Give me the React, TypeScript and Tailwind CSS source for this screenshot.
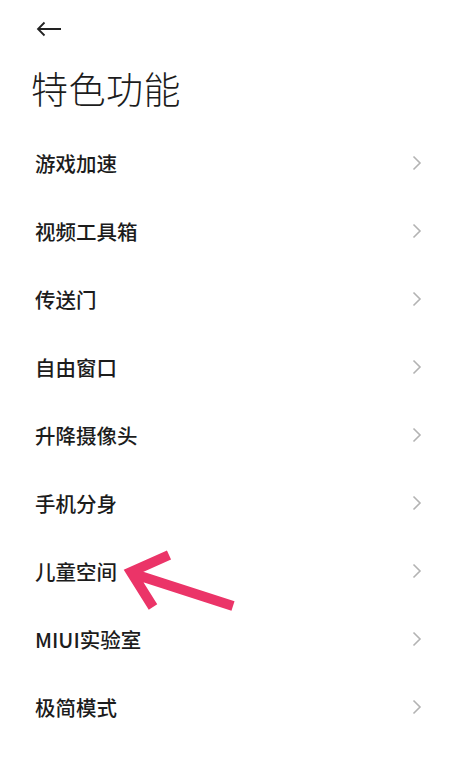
const items = [
  "游戏加速",
  "视频工具箱",
  "传送门",
  "自由窗口",
  "升降摄像头",
  "手机分身",
  "儿童空间",
  "MIUI实验室",
  "极简模式",
];

const Chevron = () => (
  <svg width="10" height="16" viewBox="0 0 10 16" fill="none">
    <path d="M1.5 1.5 L8 8 L1.5 14.5" stroke="#b3b3b3" strokeWidth="1.6" />
  </svg>
);

export default function App() {
  return (
    <div
      className="relative h-[759px] w-[457px] overflow-hidden bg-white text-[#1c1c1c]"
      style={{ fontFamily: '"Noto Sans CJK SC", "Noto Sans", sans-serif' }}
    >
      <div className="pl-[36px] pt-[21px]">
        <svg width="26" height="16" viewBox="0 0 26 16" fill="none">
          <path d="M25 8 H2 M8.5 1.5 L2 8 L8.5 14.5" stroke="#222" strokeWidth="1.8" />
        </svg>
      </div>
      <h1 className="mt-[33px] pl-[31px] text-[37px] font-light leading-[36px] tracking-[0.5px]">
        特色功能
      </h1>
      <ul className="mt-[23px]">
        {items.map((name) => (
          <li
            key={name}
            className="flex h-[68px] items-center justify-between pl-[35px] pr-[35px]"
          >
            <span className="text-[20.5px] font-medium leading-none">{name}</span>
            <Chevron />
          </li>
        ))}
      </ul>

      {/* pink pointer next to 儿童空间 */}
      <svg
        className="absolute left-0 top-0"
        width="457"
        height="759"
        viewBox="0 0 457 759"
        fill="none"
      >
        <path
          d="M169 555 L131 572 L153 607 M134 574 L233 606"
          stroke="#eb3468"
          strokeWidth="10"
          strokeLinejoin="miter"
        />
      </svg>
    </div>
  );
}
